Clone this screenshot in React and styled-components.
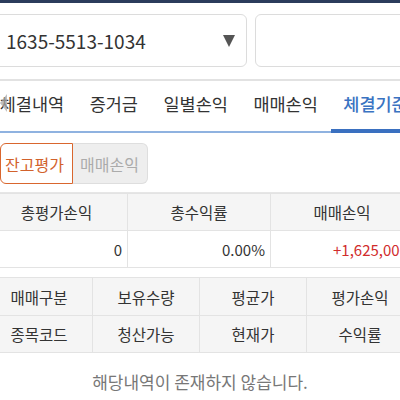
import React, { useState } from "react";
import styled, { createGlobalStyle } from "styled-components";

const GlobalStyle = createGlobalStyle`
  html, body { margin: 0; padding: 0; background: #fff; }
  body {
    font-family: "Noto Sans CJK KR", "Noto Sans", sans-serif;
    color: #333;
  }
`;

const Screen = styled.div`
  width: 400px;
  height: 400px;
  overflow: hidden;
  background: #fff;
`;

const TopBar = styled.div`
  height: 3px;
  background: #2b3c5c;
`;

const SelectRow = styled.div`
  display: flex;
  gap: 8px;
  margin-left: -10px;
  padding: 11px 0 12px;
  border-bottom: 2px solid #e2e2e2;
  width: 440px;
`;

const Box = styled.div`
  box-sizing: border-box;
  height: 53px;
  border: 1px solid #dcdcdc;
  border-radius: 6px;
  display: flex;
  align-items: center;
  justify-content: space-between;
  width: ${(p) => p.$w}px;
  padding: 0 11px 0 15px;
  font-size: 19px;
  color: #333;
`;

const Caret = styled.span`
  width: 0;
  height: 0;
  border-left: 6.5px solid transparent;
  border-right: 6.5px solid transparent;
  border-top: 12px solid #555;
`;

const TabBar = styled.div`
  position: relative;
  display: flex;
  margin-left: -13px;
  width: 460px;
  height: 52px;
  border-bottom: 2px solid #8fb2e0;
  box-sizing: border-box;
`;

const Tab = styled.div`
  position: relative;
  padding: 0 12.75px 5px;
  display: flex;
  align-items: center;
  font-size: 17.5px;
  white-space: nowrap;
  color: ${(p) => (p.$active ? "#3a73c2" : "#333")};
  font-weight: ${(p) => (p.$active ? 500 : 400)};
  &::after {
    content: "";
    display: ${(p) => (p.$active ? "block" : "none")};
    position: absolute;
    left: 0;
    right: 0;
    bottom: -2px;
    height: 4px;
    background: #3a70c0;
  }
`;

const ScrollHint = styled.span`
  position: absolute;
  left: 13px;
  top: 13px;
  width: 0;
  height: 0;
  border-top: 9px solid transparent;
  border-bottom: 9px solid transparent;
  border-right: 7px solid rgba(170, 170, 170, 0.75);
  z-index: 1;
`;

const Segments = styled.div`
  display: flex;
  padding: 10px 0 8px;
  border-bottom: 1px solid #e6e6e6;
`;

const Segment = styled.div`
  box-sizing: border-box;
  height: 41px;
  display: flex;
  align-items: center;
  font-size: 16px;
  padding: ${(p) => (p.$first ? "0 0 0 4px" : "0 0 0 7px")};
  border: 1px solid ${(p) => (p.$active ? "#d9662e" : "#dedede")};
  background: ${(p) => (p.$active ? "#fff" : "#eeeeee")};
  color: ${(p) => (p.$active ? "#d2622c" : "#ababab")};
  border-radius: ${(p) => (p.$first ? "6px 0 0 6px" : "0 6px 6px 0")};
  ${(p) => (p.$first ? "" : "border-left: none;")}
  width: ${(p) => p.$w}px;
`;

const Grid = styled.div`
  display: grid;
  grid-template-columns: ${(p) => p.$cols};
  margin-left: -14px;
  width: 428px;
  border-top: 1px solid #e3e3e3;
  margin-top: ${(p) => p.$mt || 0}px;
`;

const Cell = styled.div`
  box-sizing: border-box;
  height: ${(p) => p.$h || 37}px;
  display: flex;
  align-items: center;
  justify-content: ${(p) => (p.$right ? "flex-end" : "center")};
  padding: 0 5px;
  font-size: ${(p) => (p.$head ? 15.5 : 15)}px;
  background: ${(p) => (p.$head ? "#f5f5f5" : "#fff")};
  color: ${(p) => p.$color || "#333"};
  border-right: 1px solid #e3e3e3;
  border-bottom: 1px solid #e3e3e3;
  white-space: nowrap;
  overflow: hidden;
`;

const Empty = styled.div`
  text-align: center;
  font-size: 17px;
  color: #777;
  padding-top: 16px;
`;

const tabs = ["체결내역", "증거금", "일별손익", "매매손익", "체결기준"];

export default function App() {
  const [tab] = useState(4);

  return (
    <>
      <GlobalStyle />
      <Screen>
        <TopBar />
        <SelectRow>
          <Box $w={257}>
            1635-5513-1034
            <Caret />
          </Box>
          <Box $w={170} />
        </SelectRow>
        <TabBar>
          <ScrollHint />
          {tabs.map((t, i) => (
            <Tab key={t} $active={i === tab}>
              {t}
            </Tab>
          ))}
        </TabBar>
        <Segments>
          <Segment $first $active $w={73}>잔고평가</Segment>
          <Segment $w={75}>매매손익</Segment>
        </Segments>
        <Grid $cols="142px 143px 143px">
          <Cell $head>총평가손익</Cell>
          <Cell $head>총수익률</Cell>
          <Cell $head>매매손익</Cell>
          <Cell $right>0</Cell>
          <Cell $right>0.00%</Cell>
          <Cell $right $color="#d12c2c">+1,625,000</Cell>
        </Grid>
        <Grid $cols="repeat(4, 107px)" $mt={9}>
          <Cell $head $h={38}>매매구분</Cell>
          <Cell $head $h={38}>보유수량</Cell>
          <Cell $head $h={38}>평균가</Cell>
          <Cell $head $h={38}>평가손익</Cell>
          <Cell $head>종목코드</Cell>
          <Cell $head>청산가능</Cell>
          <Cell $head>현재가</Cell>
          <Cell $head>수익률</Cell>
        </Grid>
        <Empty>해당내역이 존재하지 않습니다.</Empty>
      </Screen>
    </>
  );
}
